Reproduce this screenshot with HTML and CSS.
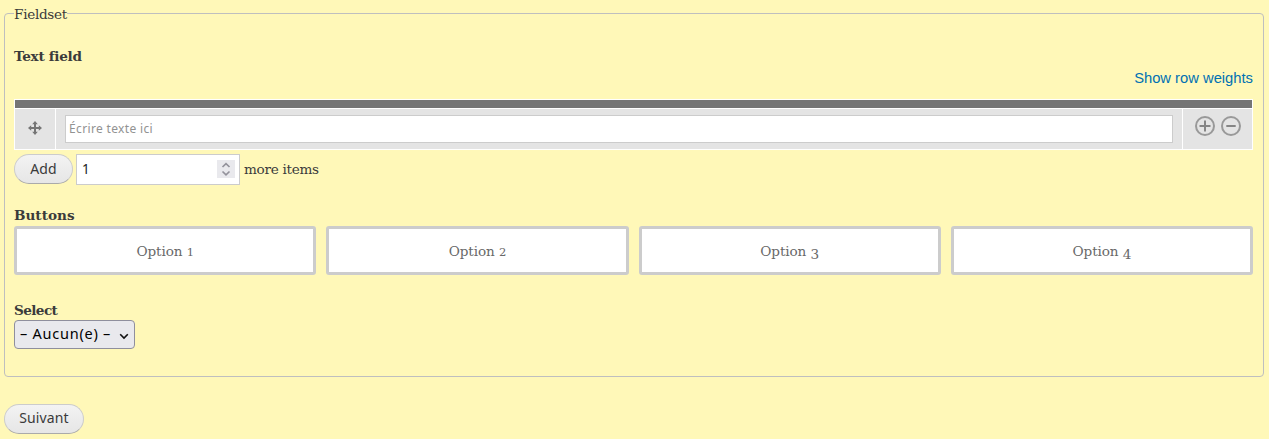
FILE: index.html
```html
<!DOCTYPE html>
<html lang="fr">
<head>
<meta charset="utf-8">
<title>Fieldset</title>
<link rel="stylesheet" href="styles.css">
</head>
<body>
<form class="form">
  <section class="fieldset">
    <div class="legend"><span class="legend-text">Fieldset</span></div>
    <div class="label label-text">Text field</div>
    <div class="weights"><a class="weights-link">Show row weights</a></div>
    <div class="table">
      <div class="table-head"></div>
      <div class="cell cell-handle">
        <svg width="14" height="14" viewBox="0 0 14 14" fill="#757575"><path d="M7 0 9.800 3.200H8V6h2.800V4.200L14 7l-3.200 2.800V8H8v2.800h1.800L7 14 4.200 10.800H6V8H3.200v1.800L0 7l3.200-2.800V6H6V3.200H4.200z"/></svg>
      </div>
      <div class="cell cell-input"><input class="text-input" type="text" placeholder="Écrire texte ici"></div>
      <div class="cell cell-actions">
        <svg width="20" height="20" viewBox="0 0 20 20" fill="none" stroke="#999"><circle cx="10" cy="10" r="9" stroke-width="2"/><path d="M4.500 10h11M10 4.500v11" stroke="#858585" stroke-width="2"/></svg>
        <svg width="20" height="20" viewBox="0 0 20 20" fill="none" stroke="#999"><circle cx="10" cy="10" r="9" stroke-width="2"/><path d="M5.300 10h9.400" stroke="#858585" stroke-width="2"/></svg>
      </div>
    </div>
    <div class="add-row">
      <button class="button button-add" type="button">Add</button>
      <div class="number">
        <span>1</span>
        <span class="spinner"><svg width="18" height="18" viewBox="0 0 18 18" fill="none" stroke="#93929b" stroke-width="1.700"><path d="m5.500 7 3.500-3.300L12.500 7M5.500 11.500 9 14.800l3.500-3.300"/></svg></span>
      </div>
      <span class="more">more items</span>
    </div>
    <div class="label label-buttons">Buttons</div>
    <div class="options">
      <div class="option"><span>Option <span class="digit-small">1</span></span></div>
      <div class="option"><span>Option <span class="digit-small">2</span></span></div>
      <div class="option"><span>Option <span class="digit-low">3</span></span></div>
      <div class="option"><span>Option <span class="digit-low">4</span></span></div>
    </div>
    <div class="label label-select">Select</div>
    <div class="select">
      <span>– Aucun(e) –</span>
      <svg width="10" height="7" viewBox="0 0 10 7" fill="none" stroke="#111" stroke-width="1.600"><path d="m1.200 1.200 3.800 3.800 3.800-3.800"/></svg>
    </div>
  </section>
  <button class="button button-next" type="button">Suivant</button>
</form>
</body>
</html>
```
FILE: styles.css
```css
* { box-sizing: border-box; }
body {
  margin: 0;
  height: 439px;
  overflow: hidden;
  background: #fff8b8;
  color: #3b3b3b;
  font: 13.6px/20px "DejaVu Serif", serif;
  letter-spacing: -0.3px;
}
svg { display: block; flex: none; }
.form { padding: 13px 5px 0 4px; }
.fieldset {
  height: 364px;
  padding: 0 10px 0 9px;
  border: 1px solid #bfbfbf;
  border-radius: 4px;
}
.legend { height: 20px; margin-top: -10px; }
.legend-text { display: inline-block; background: #fff8b8; }
.label { font-weight: bold; height: 20px; }
.label-text { margin-top: 22px; }
.weights {
  height: 20px;
  margin-top: 2px;
  text-align: right;
  font: 14.75px/20px "Liberation Sans", Arial, sans-serif;
  letter-spacing: 0;
}
.weights-link { color: #0071b3; }
.table {
  display: grid;
  grid-template: 8px 40px / 40px 1fr 69px;
  gap: 1px;
  height: 51px;
  margin-top: 11px;
  padding: 1px;
  background: #fff;
}
.table-head { grid-column: 1 / -1; background: #757575; }
.cell { display: flex; align-items: center; background: #e4e4e4; }
.cell-handle { justify-content: center; padding-bottom: 2px; }
.cell-input { padding: 0 9px; }
.text-input {
  width: 100%;
  height: 28px;
  padding: 0 3px 1px;
  border: 1px solid #ccc;
  background: #fff;
  font: 12px "Noto Sans", sans-serif;
  letter-spacing: 0.35px;
}
.text-input::placeholder { color: #929292; opacity: 1; }
.cell-actions { gap: 6px; padding: 0 0 6px 12px; }
.add-row { display: flex; height: 31px; margin-top: 4px; }
.button {
  display: flex;
  align-items: center;
  justify-content: center;
  height: 30px;
  padding: 0 0 2px;
  border: 1px solid #ccc;
  border-bottom-color: #aaa;
  border-radius: 15px;
  background: linear-gradient(#f3f3f3, #e6e6e6);
  color: #3a3a3a;
  font: 14px/20px "Noto Sans", sans-serif;
  letter-spacing: 0.1px;
}
.button-add { width: 59px; padding-bottom: 0; }
.number {
  display: flex;
  align-items: center;
  justify-content: space-between;
  width: 164px;
  height: 31px;
  margin-left: 3px;
  padding: 0 4px 1px 5px;
  border: 1px solid #ccc;
  background: #fff;
  color: #222;
  font: 13.5px/20px "Noto Sans", sans-serif;
}
.spinner { background: #e9e9ed; }
.more { margin: 5px 0 0 4px; }
.label-buttons { margin-top: 20px; letter-spacing: 0; }
.options { display: grid; grid-template-columns: repeat(4, 1fr); gap: 10px; margin-top: 1px; }
.option {
  display: flex;
  align-items: center;
  justify-content: center;
  height: 49px;
  border: 3px solid #ccc;
  border-radius: 3px;
  background: #fff;
  color: #686868;
  letter-spacing: -0.1px;
}
.digit-small { font-size: 11.5px; line-height: 0; }
.digit-low { line-height: 0; vertical-align: -3px; }
.label-select { margin-top: 25px; letter-spacing: -0.6px; }
.select {
  display: flex;
  align-items: center;
  justify-content: space-between;
  width: 121px;
  height: 29px;
  padding: 0 5px 3px;
  border: 1px solid #8f8f9d;
  border-radius: 4px;
  background: #e9e9ed;
  color: #000;
  font: 14.5px/20px "Noto Sans", sans-serif;
  letter-spacing: 0.75px;
}
.select svg { margin-top: 6px; }
.button-next { width: 80px; margin-top: 27px; }
```
